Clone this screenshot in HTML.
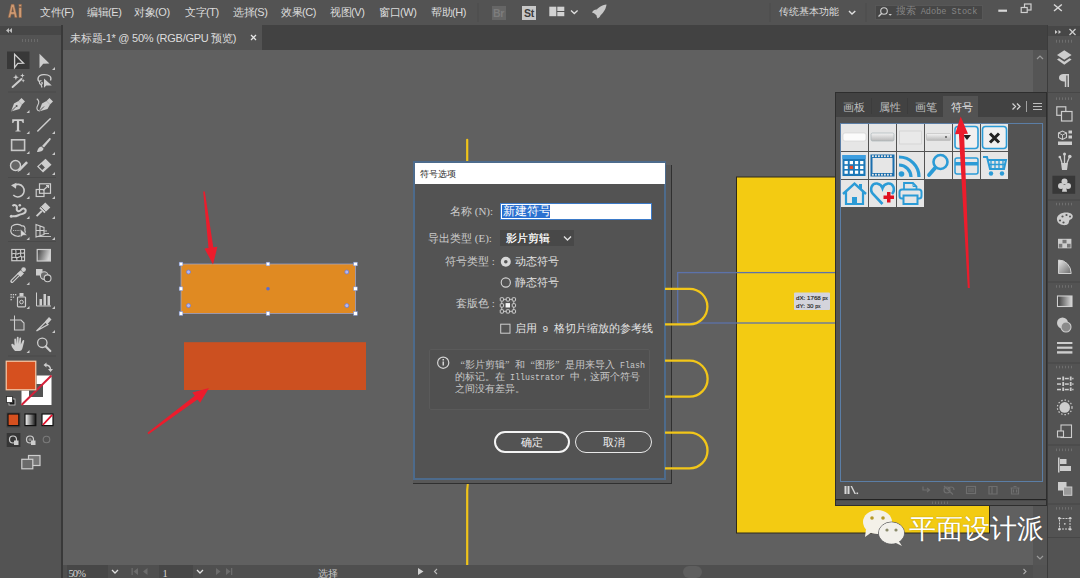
<!DOCTYPE html>
<html><head><meta charset="utf-8">
<style>
*{margin:0;padding:0;box-sizing:border-box}
html,body{width:1080px;height:578px;overflow:hidden;background:#535353;font-family:"Liberation Sans",sans-serif;color:#e0e0e0}
.a{position:absolute;white-space:nowrap}
.mi{position:absolute;top:5px;font-size:11px;line-height:14px;color:#dcdcdc;letter-spacing:-0.45px}
.dl{font-family:"Liberation Serif",serif;font-size:11px;line-height:14px;color:#cccccc;font-weight:300}
.di{font-family:"Liberation Serif",serif;font-size:10px;line-height:12px;color:#c8c8c8;font-weight:300}
.ql,.qr{display:inline-block;width:10px}.ql{text-align:right}.qr{text-align:left}
.mo{font-family:"Liberation Mono",monospace;font-size:8.333px}
.pt{font-size:11px;line-height:14px;color:#bdbdbd}
svg{position:absolute;left:0;top:0}
</style></head><body>
<!-- base regions -->
<div class="a" style="left:0;top:0;width:1080px;height:25px;background:#535353"></div>
<div class="a" style="left:0;top:25px;width:1047px;height:25px;background:#424242"></div>
<div class="a" style="left:63px;top:25px;width:199px;height:25px;background:#535353"></div>
<div class="a" style="left:0;top:25px;width:62px;height:553px;background:#535353"></div>
<div class="a" style="left:0;top:26px;width:61px;height:9px;background:#474747"></div>
<div class="a" style="left:61px;top:25px;width:2px;height:553px;background:#393939"></div>
<div class="a" style="left:63px;top:50px;width:970px;height:515px;background:#606060"></div>
<div class="a" style="left:1033px;top:50px;width:14px;height:515px;background:#555555"></div>
<div class="a" style="left:63px;top:565px;width:970px;height:13px;background:#4f4f4f"></div>
<div class="a" style="left:1047px;top:25px;width:33px;height:553px;background:#535353;border-left:1px solid #3c3c3c"></div>
<div class="a" style="left:1048px;top:26px;width:32px;height:10px;background:#474747"></div>

<!-- menu -->
<div class="mi" style="left:40px">文件(F)</div>
<div class="mi" style="left:87px">编辑(E)</div>
<div class="mi" style="left:134px">对象(O)</div>
<div class="mi" style="left:185px">文字(T)</div>
<div class="mi" style="left:233px">选择(S)</div>
<div class="mi" style="left:281px">效果(C)</div>
<div class="mi" style="left:330px">视图(V)</div>
<div class="mi" style="left:379px">窗口(W)</div>
<div class="mi" style="left:431px">帮助(H)</div>
<div class="a" style="left:491.5px;top:6px;width:14px;height:13.5px;background:#666666;color:#7d7d7d;font-size:10.5px;line-height:14px;text-align:center;font-weight:bold;letter-spacing:-0.3px">Br</div>
<div class="a" style="left:522px;top:6px;width:14px;height:13.5px;background:#c8c8c8;color:#3c3c3c;font-size:10.5px;line-height:14px;text-align:center;font-weight:bold;letter-spacing:-0.3px">St</div>
<div class="mi" style="left:779px;font-size:10px;letter-spacing:0">传统基本功能</div>
<div class="a" style="left:875px;top:4.5px;width:108px;height:15.5px;background:#464646;border:1px solid #575757"></div>
<div class="a" style="left:895.5px;top:5px;font-family:'Liberation Mono',monospace;font-size:8.6px;line-height:14px;color:#858585"><span style="font-size:9.5px">搜索</span> Adobe Stock</div>

<!-- tab -->
<div class="a" style="left:70px;top:31px;font-size:11px;line-height:14px;color:#dedede;letter-spacing:-0.25px">未标题-1* @ 50% (RGB/GPU 预览)</div>

<!-- status -->
<div class="a" style="left:67px;top:565px;width:41px;height:13px;background:#474747"></div>
<div class="a" style="left:159px;top:565px;width:34px;height:13px;background:#474747"></div>
<div class="a" style="left:68.5px;top:567px;font-family:'Liberation Serif',serif;font-size:10.5px;line-height:13px;color:#d4d4d4;letter-spacing:-0.9px">50%</div>
<div class="a" style="left:162.5px;top:567px;font-family:'Liberation Serif',serif;font-size:10.5px;line-height:13px;color:#d4d4d4">1</div>
<div class="a" style="left:317.5px;top:567px;font-size:10px;line-height:13px;color:#c8c8c8">选择</div>
<svg width="1080" height="578" viewBox="0 0 1080 578"><g id="toolbar" fill="#cdcdcd" stroke="none">
 <!-- header arrows << -->
 <path d="M9,28 L6,30.5 L9,33 Z M12,28 L9,30.5 L12,33 Z" fill="#bdbdbd"/>
 <!-- gripper -->
 <g fill="#6a6a6a"><rect x="22" y="39" width="1" height="3"/><rect x="25" y="39" width="1" height="3"/><rect x="28" y="39" width="1" height="3"/><rect x="31" y="39" width="1" height="3"/><rect x="34" y="39" width="1" height="3"/><rect x="37" y="39" width="1" height="3"/></g>
 <!-- selected tool bg -->
 <rect x="7" y="51.5" width="22.5" height="17.5" fill="#383838"/>
 <!-- selection arrow outline -->
 <path d="M14.6,54.3 L14.6,67.6 L17.8,63.4 L23.5,63.2 Z" fill="none" stroke="#d0d0d0" stroke-width="1.3" stroke-linejoin="miter"/>
 <!-- direct selection -->
 <path d="M39.5,53.7 L39.5,68.2 L43.2,63.8 L49.4,63.6 Z"/>
 <!-- separators -->
 <g fill="#4a4a4a"><rect x="8" y="91.5" width="48" height="1"/><rect x="8" y="177" width="48" height="1"/><rect x="8" y="241" width="48" height="1"/><rect x="8" y="355.5" width="48" height="1"/></g>
 <!-- magic wand -->
 <path d="M12.6,87 L21.5,79" stroke="#cdcdcd" stroke-width="2" stroke-linecap="round"/>
 <path d="M15.9,74.3 L16.7,76.5 L18.9,77.3 L16.7,78.1 L15.9,80.3 L15.1,78.1 L12.9,77.3 L15.1,76.5 Z"/>
 <path d="M22.4,73.3 L23.0,75.0 L24.7,75.6 L23.0,76.19999999999999 L22.4,77.89999999999999 L21.799999999999997,76.19999999999999 L20.099999999999998,75.6 L21.799999999999997,75.0 Z"/>
 <path d="M23.2,78.9 L23.7,80.2 L25.0,80.7 L23.7,81.2 L23.2,82.5 L22.7,81.2 L21.4,80.7 L22.7,80.2 Z"/>
 <!-- lasso -->
 <path d="M40,82 C36.5,80 37.5,75 43.5,74.6 C49.5,74.3 52,77 50.5,80.5" fill="none" stroke="#cdcdcd" stroke-width="1.3"/>
 <path d="M41.5,80.5 C39,80.5 38.7,84 40.8,84.3 C42.6,84.5 42.8,82.5 41.3,82.3 M41,84.3 L42,87.5" fill="none" stroke="#cdcdcd" stroke-width="1.2"/>
 <path d="M44,78.5 L44,87.8 L46.3,85.5 L51.8,85.4 Z"/>
 <!-- pen -->
 <path d="M11,111.5 L14,103.5 L18.5,101 L22,104.5 L19.5,109 Z" />
 <path d="M18.5,101 L21.5,98 L25,101.5 L22,104.5 Z"/>
 <path d="M11,111.5 L16,106.5" stroke="#535353" stroke-width="1"/>
 <circle cx="16.6" cy="105.9" r="1" fill="#535353"/>
 <!-- curvature pen -->
 <path d="M39,111.5 L42,103.5 L46.5,101 L50,104.5 L47.5,109 Z"/>
 <path d="M46.5,101 L49.5,98 L53,101.5 L50,104.5 Z"/>
 <path d="M39,111.5 L44,106.5" stroke="#535353" stroke-width="1"/>
 <path d="M36.8,98.8 C38.8,100.3 39.3,102.8 37.8,105.2 C36.3,107.5 36.5,110.5 39.5,111" fill="none" stroke="#cdcdcd" stroke-width="1.1"/>
 <!-- T -->
 <path d="M12.2,119.3 H23.8 V123 H22.6 C22.4,121.4 21.8,120.9 20.4,120.9 H19.1 V129.7 C19.1,130.4 19.5,130.6 20.6,130.7 V131.5 H15.4 V130.7 C16.5,130.6 16.9,130.4 16.9,129.7 V120.9 H15.6 C14.2,120.9 13.6,121.4 13.4,123 H12.2 Z"/>
 <!-- line -->
 <path d="M37.8,131 L50.2,118.8" stroke="#cdcdcd" stroke-width="1.5" stroke-linecap="round"/>
 <!-- rect -->
 <rect x="11.6" y="139.8" width="13" height="10.6" fill="#5c5c5c" stroke="#c8c8c8" stroke-width="1.6"/>
 <!-- brush -->
 <path d="M37,152 C37.5,149 39,146.5 41.5,146.5 L43.5,148.5 C43.5,151 40,152 37,152 Z"/>
 <path d="M42,146 L49,138.5 C50.2,137.5 51.3,138.6 50.5,139.8 L44,147.5 Z"/>
 <!-- shaper -->
 <circle cx="15.5" cy="165.5" r="5" fill="#656565" stroke="#cdcdcd" stroke-width="1.4"/>
 <path d="M17.5,172.3 L19,168.5 L26.2,161.3 L28,163.1 L20.8,170.3 Z"/>
 <!-- eraser -->
 <path d="M37,166.5 L45.5,158.8 L51.5,164.8 L43,172.5 Z"/>
 <path d="M38.8,166.6 L41.5,164.1 L44.9,167.5 L42.2,170 Z" fill="#535353"/>
 <!-- rotate -->
 <path d="M14.2,185.5 A6.3,6.3 0 1 1 13.3,195" fill="none" stroke="#cdcdcd" stroke-width="1.6"/>
 <path d="M11,185.3 L16.5,182.8 L16,188.8 Z"/>
 <!-- scale -->
 <rect x="39.5" y="183.8" width="11" height="9.5" fill="none" stroke="#cdcdcd" stroke-width="1.2"/>
 <rect x="36.2" y="189.5" width="7.8" height="7" fill="none" stroke="#cdcdcd" stroke-width="1.2"/>
 <path d="M43,190.5 L48.5,185.5 M46,185.5 H48.5 V188" fill="none" stroke="#cdcdcd" stroke-width="1.2"/>
 <!-- warp -->
 <path d="M12.5,206 C14.5,203.8 17.5,205.5 16.8,208.3 C16.2,211 19,212.3 21,209.8 C23,207.3 26.3,208.6 25.6,211.6 C25,214.3 21.8,213.8 19.8,214.6 C17.5,215.5 15.3,217.2 12.3,216" fill="none" stroke="#cdcdcd" stroke-width="2"/>
 <circle cx="19.8" cy="205.3" r="1.3"/>
 <circle cx="11.3" cy="216.2" r="1.5"/>
 <!-- puppet pin -->
 <path d="M39.3,208.3 L45.3,202.6 L50.3,207.6 L44.3,213.3 Z"/>
 <path d="M40.8,206.8 L45.8,211.8" stroke="#535353" stroke-width="0.8"/>
 <path d="M36.6,216.2 L41.8,211" stroke="#cdcdcd" stroke-width="1.8"/>
 <!-- free transform -->
 <path d="M13,225.5 C16,223.5 20,224.5 22,226 C24.5,225.5 25.5,228 24.8,230 C26,232 24.5,235 22,235 C19.5,237 15,236.5 13,234.5 C10.5,233.5 10.3,230 11.5,228.5 C11,227 12,225.8 13,225.5 Z" fill="none" stroke="#cdcdcd" stroke-width="1.2"/>
 <path d="M13,230.5 H21" stroke="#cdcdcd" stroke-width="0.8" stroke-dasharray="1.2 1"/>
 <path d="M20.6,229.2 L20.6,237.6 L22.9,235.3 L27.2,235.2 Z" fill="#d8d8d8" stroke="#535353" stroke-width="0.5"/>
 <!-- perspective grid -->
 <path d="M36,224.5 L36,237 L44,234.5 L44,227.5 Z M36,230.5 L44,230.5 M40,225.8 L40,235.8" fill="none" stroke="#cdcdcd" stroke-width="1.1"/>
 <path d="M44,231 H47 M44,233.5 H49 M38,236.5 H51" stroke="#cdcdcd" stroke-width="0.9"/>
 <!-- mesh -->
 <rect x="11.8" y="249.5" width="12.7" height="11.2" fill="#3e3e3e" stroke="#cdcdcd" stroke-width="1.2"/>
 <path d="M12,254 C14.5,252 16,255.5 18.5,253.5 C20.5,252 22.5,254.5 24.5,252.5 M12,257.8 C14.5,256 16.5,259 19,257 C21,255.5 22.5,258 24.5,256.5 M15.3,249.5 C17.5,252 14,255.5 16.5,258 C17.5,259 16.5,260 16.8,260.7 M20.3,249.5 C21.5,252 19.5,255 21.5,257.5 C22,258.5 21.5,260 21.8,260.7" fill="none" stroke="#cdcdcd" stroke-width="1.1"/>
 <!-- gradient -->
 <defs><linearGradient id="tg" x1="0" y1="0" x2="1" y2="0.3"><stop offset="0" stop-color="#3c3c3c"/><stop offset="1" stop-color="#d4d4d4"/></linearGradient></defs>
 <rect x="37.2" y="249.5" width="13.2" height="11.5" fill="url(#tg)" stroke="#cdcdcd" stroke-width="1.2"/>
 <!-- eyedropper -->
 <path d="M12,281.3 L19,274.3" stroke="#cdcdcd" stroke-width="3.4" stroke-linecap="round"/>
 <path d="M12.3,281 L18.7,274.6" stroke="#535353" stroke-width="1.2" stroke-linecap="round"/>
 <path d="M17.2,273.6 L20.6,270.2 L24,273.6 L20.6,277 Z"/>
 <circle cx="23.6" cy="269.6" r="2.3"/>
 <!-- blend -->
 <rect x="36" y="269" width="6.5" height="6.5"/>
 <circle cx="44.2" cy="275.6" r="3.8" fill="#6a6a6a" stroke="#cdcdcd" stroke-width="1.1"/>
 <circle cx="47.6" cy="278.3" r="3.4" fill="#454545" stroke="#cdcdcd" stroke-width="1.1"/>
 <!-- symbol sprayer -->
 <rect x="17.5" y="297" width="8" height="9.8" rx="0.8" fill="none" stroke="#cdcdcd" stroke-width="1.2"/>
 <rect x="19.5" y="293" width="4" height="3.5"/>
 <circle cx="21.5" cy="302" r="1.8" fill="none" stroke="#cdcdcd" stroke-width="1"/>
 <g><rect x="10.5" y="294" width="1.3" height="1.3"/><rect x="12.8" y="294" width="1.3" height="1.3"/><rect x="15" y="294" width="1.3" height="1.3"/><rect x="10.5" y="296.5" width="1.3" height="1.3"/><rect x="12.8" y="296.5" width="1.3" height="1.3"/><rect x="10.5" y="299" width="1.3" height="1.3"/></g>
 <!-- graph -->
 <path d="M36.5,292.5 V306 H51" fill="none" stroke="#cdcdcd" stroke-width="1"/>
 <rect x="39.5" y="299" width="2.5" height="6.5"/><rect x="43.5" y="294" width="2.5" height="11.5"/><rect x="47.5" y="296" width="2.5" height="9.5"/>
 <!-- artboard -->
 <path d="M14.5,320 H21 L24,323 V330 H14.5 Z" fill="#5e5e5e" stroke="#cdcdcd" stroke-width="1.1"/>
 <path d="M14.5,315.5 V320 M10,320 H14.5" stroke="#cdcdcd" stroke-width="1"/>
 <!-- slice -->
 <path d="M36.5,331 L45.5,322 L48,324.5 Z" fill="none" stroke="#cdcdcd" stroke-width="1.2"/>
 <path d="M45,321.5 L49,317 L51.5,319.5 L47.5,324 Z"/>
 <!-- hand -->
 <path d="M15,351 C13,349 11,346 11.3,344.5 C11.6,343.3 13,343.5 14,345 L14.5,345.5 L14.3,339.5 C14.3,338.2 16,338.2 16.1,339.5 L16.5,344 L16.8,337.8 C16.8,336.5 18.6,336.5 18.6,337.8 L18.7,344 L19.4,338.4 C19.6,337.2 21.2,337.4 21.1,338.6 L20.8,344.5 L22.5,340.7 C23,339.6 24.5,340 24.2,341.2 L22.5,348 C22,350 21,351 19.5,351 Z"/>
 <!-- zoom -->
 <circle cx="42.3" cy="342.8" r="4.7" fill="none" stroke="#cdcdcd" stroke-width="1.3"/>
 <path d="M45.8,346.4 L50.3,351" stroke="#cdcdcd" stroke-width="2.2" stroke-linecap="round"/>
 <!-- group triangles -->
 <g fill="#c8c8c8">
  <path d="M55,67 V70 H52 Z"/>
  <path d="M29.5,110 V113 H26.5 Z"/>
  <path d="M29.5,131 V134 H26.5 Z"/><path d="M55,131 V134 H52 Z"/>
  <path d="M29.5,151 V154 H26.5 Z"/><path d="M55,152 V155 H52 Z"/>
  <path d="M29.5,172 V175 H26.5 Z"/><path d="M55,172 V175 H52 Z"/>
  <path d="M29.5,196 V199 H26.5 Z"/><path d="M55,196 V199 H52 Z"/>
  <path d="M29.5,216 V219 H26.5 Z"/><path d="M55,216 V219 H52 Z"/>
  <path d="M29.5,237 V240 H26.5 Z"/><path d="M55,237 V240 H52 Z"/>
  <path d="M29.5,282 V285 H26.5 Z"/>
  <path d="M29.5,306 V309 H26.5 Z"/><path d="M55,306 V309 H52 Z"/>
  <path d="M55,330 V333 H52 Z"/>
  <path d="M29.5,350 V353 H26.5 Z"/>
 </g>
 <!-- fill / stroke -->
 <rect x="21.5" y="375.5" width="30" height="29.5" fill="#ffffff"/>
 <rect x="29" y="384" width="14" height="13" fill="#535353"/>
 <path d="M21.5,405 L51.5,375.5" stroke="#d4213a" stroke-width="2"/>
 <rect x="5.5" y="360.5" width="31" height="30" fill="#2f2f2f"/>
 <rect x="6.2" y="361.2" width="29.6" height="28.6" fill="#d6501f" stroke="#f6c8a8" stroke-width="1.3"/>
 <!-- swap arrow -->
 <path d="M45,365 C48.5,365 50.5,366 50.5,369.5" fill="none" stroke="#cdcdcd" stroke-width="1.3"/>
 <path d="M43.5,365 L46.5,362.5 L46.5,367.5 Z M50.5,372 L48,369 L53,369 Z"/>
 <!-- default fill stroke -->
 <rect x="9" y="399" width="6" height="6" fill="#1a1a1a" stroke="#cdcdcd" stroke-width="0.8"/>
 <rect x="6.5" y="396.5" width="6" height="6" fill="#ffffff" stroke="#2a2a2a" stroke-width="0.8"/>
 <!-- color mode row -->
 <rect x="6.5" y="412.5" width="14" height="15" fill="#444"/>
 <rect x="8" y="414" width="10.8" height="11.6" fill="#d6501f" stroke="#111" stroke-width="1.2"/>
 <defs><linearGradient id="bw" x1="0" x2="1"><stop offset="0" stop-color="#fff"/><stop offset="1" stop-color="#111"/></linearGradient></defs>
 <rect x="25" y="414" width="10.8" height="11.6" fill="url(#bw)" stroke="#111" stroke-width="1.2"/>
 <rect x="42" y="414" width="11" height="11.6" fill="#fff" stroke="#111" stroke-width="1.2"/>
 <path d="M42.8,425 L52.2,414.8" stroke="#e0102a" stroke-width="1.8"/>
 <!-- draw modes -->
 <rect x="6.7" y="433" width="13.7" height="14" fill="#363636"/>
 <circle cx="13" cy="439.5" r="3.5" fill="none" stroke="#cdcdcd" stroke-width="1.2"/>
 <rect x="14" y="440.5" width="4.5" height="4.5"/>
 <circle cx="30" cy="439.5" r="3.5" fill="none" stroke="#cdcdcd" stroke-width="1.2"/>
 <circle cx="30" cy="439.5" r="1.5" fill="#888"/>
 <rect x="31" y="440.5" width="4.5" height="4.5"/>
 <circle cx="46.5" cy="439.5" r="3.3" fill="none" stroke="#7a7a7a" stroke-width="1.1"/>
 <!-- screen mode -->
 <rect x="28.5" y="455.5" width="11.5" height="10" fill="#777" stroke="#cdcdcd" stroke-width="1.2"/>
 <rect x="21.8" y="459.3" width="11" height="9.5" fill="#6b6b6b" stroke="#cdcdcd" stroke-width="1.2"/>
</g>
<g id="misc" fill="#d2d2d2">
 <!-- ai logo -->
 <path d="M8.2,17.6 L11.3,4.3 H14 L17.2,17.6 H14.8 L14.1,14.2 H11.2 L10.5,17.6 Z M11.7,12 H13.6 L12.65,7.2 Z" fill="#cf9b74" stroke="#8e6040" stroke-width="0.5"/>
 <rect x="18.9" y="7.6" width="2.6" height="10" fill="#cf9b74" stroke="#8e6040" stroke-width="0.5"/>
 <rect x="18.9" y="4.3" width="2.6" height="2.3" fill="#cf9b74" stroke="#8e6040" stroke-width="0.5"/>
 <!-- layout icon -->
 <rect x="549.3" y="6.7" width="7" height="9.5"/>
 <rect x="557.3" y="6.7" width="7" height="4.3"/>
 <rect x="557.3" y="12" width="7" height="4.2"/>
 <path d="M571,10.5 L574.3,13.5 L577.6,10.5" fill="none" stroke="#e0e0e0" stroke-width="1.3"/>
 <!-- rocket -->
 <path d="M594,13 C597,8 602,5 606.5,4.5 C606,9 603,14 598,17 Z" fill="#c8c8c8"/>
 <path d="M592,12.5 C593,10 595.5,9 597,9.5 L594.5,13.5 Z M597.5,18.5 C600,17.5 601,15 600.5,13.5 L596.5,16 Z" fill="#c8c8c8"/>
 <!-- separators in menubar -->
 <rect x="477.5" y="3" width="1" height="19" fill="#4c4c4c"/>
 <rect x="769.5" y="3" width="1" height="19" fill="#4c4c4c"/>
 <rect x="865.5" y="3" width="1" height="19" fill="#4c4c4c"/>
 <!-- workspace chevron -->
 <path d="M849,11 L852,14 L855.3,11" fill="none" stroke="#e0e0e0" stroke-width="1.4"/>
 <!-- search magnifier -->
 <circle cx="884" cy="11" r="3.3" fill="none" stroke="#cfcfcf" stroke-width="1.1"/>
 <path d="M881.6,13.5 L878.5,16.5" stroke="#cfcfcf" stroke-width="1.3"/>
 <path d="M888.5,14 L892,14 L890.2,15.8 Z" fill="#cfcfcf"/>
 <!-- window controls -->
 <rect x="998.3" y="9.6" width="8.7" height="2.2" fill="#d8d8d8"/>
 <rect x="1024.5" y="4" width="6.5" height="6" fill="none" stroke="#d0d0d0" stroke-width="1.2"/>
 <rect x="1021.2" y="7.5" width="6" height="5" fill="#535353" stroke="#d0d0d0" stroke-width="1.2"/>
 <path d="M1054,4.5 L1061.8,11 M1061.8,4.5 L1054,11" stroke="#d8d8d8" stroke-width="1.5"/>
 <!-- tab close -->
 <path d="M251,35 L256,40 M256,35 L251,40" stroke="#e6e6e6" stroke-width="1.3"/>
 <!-- vertical scrollbar arrows -->
 <path d="M1037,59 L1040,56 L1043,59" fill="none" stroke="#9a9a9a" stroke-width="1.2"/>
 <path d="M1037,556 L1040,559 L1043,556" fill="none" stroke="#9a9a9a" stroke-width="1.2"/>
 <!-- status bar -->
 <path d="M112,570 L115,573 L118,570" fill="none" stroke="#e0e0e0" stroke-width="1.3"/>
 <path d="M197,570 L200,573 L203,570" fill="none" stroke="#e0e0e0" stroke-width="1.3"/>
 <g fill="#6c6c6c"><rect x="131.5" y="568" width="1.3" height="7"/><path d="M138,568 L133.5,571.5 L138,575 Z M147.5,568 L143,571.5 L147.5,575 Z"/>
 <path d="M216,568 L220.5,571.5 L216,575 Z M226,568 L230.5,571.5 L226,575 Z"/><rect x="231" y="568" width="1.3" height="7"/></g>
 <path d="M418,568 L423.5,571.5 L418,575 Z" fill="#d0d0d0"/>
 <path d="M437,569 L434.5,571.5 L437,574" fill="none" stroke="#bbb" stroke-width="1.1"/>
 <rect x="683" y="566" width="19" height="12" rx="6" fill="#5e5e5e"/>
 <path d="M1023.5,569 L1026,571.5 L1023.5,574" fill="none" stroke="#aaa" stroke-width="1.1"/>
</g>
<g id="rstrip" fill="#cdcdcd">
 <!-- header -->
 <path d="M1055,30 L1057.5,32 L1055,34 Z M1058.5,30 L1061,32 L1058.5,34 Z"/>
 <path d="M1069.5,29 L1075.5,35 M1075.5,29 L1069.5,35" stroke="#cdcdcd" stroke-width="1.3"/>
 <!-- grippers -->
 <g fill="#6e6e6e">
  <rect x="1055" y="40" width="17" height="2.5" fill="url(#grip)"/>
 </g>
 <!-- separators -->
 <g fill="#474747"><rect x="1048" y="92" width="32" height="1"/><rect x="1048" y="199.5" width="32" height="1"/><rect x="1048" y="281.5" width="32" height="1"/><rect x="1048" y="362.5" width="32" height="1"/><rect x="1048" y="444.5" width="32" height="1"/><rect x="1048" y="503.5" width="32" height="1"/><rect x="1048" y="537" width="32" height="1"/></g>
 <!-- layers -->
 <path d="M1057,55 L1064.3,50.3 L1071.6,55 L1064.3,59.7 Z"/>
 <path d="M1057,59.5 L1059,58.3 L1064.3,61.7 L1069.6,58.3 L1071.6,59.5 L1064.3,64.8 Z"/>
 <!-- pilcrow -->
 <path d="M1063.5,74 H1069 V87 H1067.5 V75.5 H1066.3 V87 H1064.8 V81.5 C1061.5,81.5 1059,80.2 1059,77.7 C1059,75.2 1061,74 1063.5,74 Z"/>
 <!-- artboards -->
 <rect x="1056.8" y="106.8" width="9" height="8.5" fill="none" stroke="#cdcdcd" stroke-width="1.2"/>
 <rect x="1061.5" y="111.5" width="10.5" height="9.5" fill="#535353" stroke="#cdcdcd" stroke-width="1.2"/>
 <!-- libraries / 3D -->
 <path d="M1058.5,133 L1062.5,131 L1066.5,133 L1066.5,137.5 L1062.5,139.5 L1058.5,137.5 Z" fill="none" stroke="#cdcdcd" stroke-width="1.1"/>
 <path d="M1058.5,133 L1062.5,135 L1066.5,133 M1062.5,135 V139.5" fill="none" stroke="#cdcdcd" stroke-width="0.9"/>
 <rect x="1068.5" y="130.5" width="3.5" height="3"/><rect x="1068.5" y="135.5" width="3.5" height="3"/>
 <rect x="1058" y="141.5" width="14" height="3.5"/>
 <!-- brushes -->
 <path d="M1061,163 H1068 L1067,170 H1062 Z"/>
 <path d="M1062,163 L1060,157 M1064.5,163 L1064.5,154 M1067,163 L1069.5,157" stroke="#cdcdcd" stroke-width="1.3"/>
 <circle cx="1064.5" cy="154" r="1.5"/><circle cx="1069.8" cy="156.5" r="1.8"/><circle cx="1059.8" cy="157" r="1.3"/>
 <!-- symbols selected -->
 <rect x="1052.4" y="175.7" width="22.8" height="18.1" fill="#383838"/>
 <circle cx="1064.5" cy="181.5" r="3"/><circle cx="1061" cy="186" r="3"/><circle cx="1068" cy="186" r="3"/>
 <path d="M1063.3,185 L1062,191.8 H1067 L1065.7,185 Z"/>
 <!-- color palette -->
 <path d="M1057,220 C1056,214 1064,211.5 1069.5,213 C1074,214.3 1073.5,218.5 1070.5,219.5 C1068.5,220.2 1069.5,222.5 1068,224 C1065,226.5 1058,225 1057,220 Z"/>
 <g fill="#535353"><circle cx="1060" cy="220.5" r="1.1"/><circle cx="1063.5" cy="222.5" r="1.1"/><circle cx="1062.5" cy="216.5" r="1.1"/><circle cx="1066.5" cy="215" r="1.1"/><circle cx="1070" cy="216.5" r="1"/></g>
 <!-- swatches -->
 <rect x="1058" y="238.8" width="13.4" height="9.5"/>
 <g fill="#777"><rect x="1062.5" y="239.8" width="4" height="3.5"/><rect x="1058.8" y="243.8" width="3.5" height="3.8"/><rect x="1067" y="243.8" width="3.6" height="3.8"/></g>
 <!-- gradient quarter -->
 <defs>
  <linearGradient id="gq" x1="0" y1="0" x2="1" y2="1"><stop offset="0" stop-color="#e8e8e8"/><stop offset="1" stop-color="#6a6a6a"/></linearGradient>
  <linearGradient id="gsq" x1="0" x2="1"><stop offset="0" stop-color="#3a3a3a"/><stop offset="1" stop-color="#dcdcdc"/></linearGradient>
  <pattern id="grip" width="3" height="3" patternUnits="userSpaceOnUse"><rect width="1" height="3" fill="#6e6e6e"/></pattern>
 </defs>
 <path d="M1058.5,260 A12.5,13.5 0 0 1 1071.2,273.5 H1058.5 Z" fill="url(#gq)" stroke="#d0d0d0" stroke-width="1"/>
 <!-- transparency -->
 <rect x="1057.5" y="296" width="14.5" height="10.5" fill="url(#gsq)" stroke="#d0d0d0" stroke-width="1.1"/>
 <!-- appearance -->
 <circle cx="1062.5" cy="323" r="5.5"/>
 <circle cx="1066" cy="327" r="5" fill="#8a8a8a" stroke="#cdcdcd" stroke-width="1.1"/>
 <!-- stroke -->
 <rect x="1057" y="342" width="15.4" height="2"/><rect x="1057" y="346.6" width="15.4" height="2.2"/><rect x="1057" y="351.2" width="15.4" height="2.4"/>
 <!-- align-like dotted -->
 <g fill="#cdcdcd"><rect x="1062.3" y="376.5" width="1.8" height="4.0"/><rect x="1062.3" y="382" width="1.8" height="4"/><rect x="1062.3" y="387.5" width="1.8" height="3.5"/><rect x="1069.8" y="376.5" width="1.8" height="4.0"/><rect x="1069.8" y="382" width="1.8" height="4"/><rect x="1069.8" y="387.5" width="1.8" height="3.5"/><rect x="1057" y="377.8" width="4" height="1.5"/><rect x="1064.8" y="377.8" width="4.0" height="1.5"/><rect x="1072.2" y="377.8" width="1.2999999999999545" height="1.5"/><rect x="1057" y="383.3" width="4" height="1.5"/><rect x="1064.8" y="383.3" width="4.0" height="1.5"/><rect x="1072.2" y="383.3" width="1.2999999999999545" height="1.5"/><rect x="1057" y="388.8" width="4" height="1.5"/><rect x="1064.8" y="388.8" width="4.0" height="1.5"/><rect x="1072.2" y="388.8" width="1.2999999999999545" height="1.5"/></g>
 <!-- glow circle -->
 <circle cx="1064.7" cy="407.4" r="5.3"/>
 <circle cx="1064.7" cy="407.4" r="7.3" fill="none" stroke="#cdcdcd" stroke-width="1.2" stroke-dasharray="1.5 1.9"/>
 <!-- transform -->
 <rect x="1061" y="425" width="10.5" height="12.5" fill="none" stroke="#cdcdcd" stroke-width="1.1"/>
 <rect x="1057.5" y="431" width="6" height="6" fill="#535353" stroke="#cdcdcd" stroke-width="1.1"/>
 <!-- align -->
 <rect x="1058" y="457.5" width="1.5" height="15"/><rect x="1060" y="459" width="6.5" height="5"/><rect x="1060" y="466" width="11" height="5"/>
 <!-- pathfinder -->
 <rect x="1058" y="482" width="8.5" height="8.5"/><rect x="1063.5" y="487" width="8.3" height="8.3" fill="#9a9a9a" stroke="#cdcdcd" stroke-width="1"/>
 <!-- artboard dotted -->
 <rect x="1059.5" y="518.5" width="10.5" height="10.5" fill="none" stroke="#cdcdcd" stroke-width="1" stroke-dasharray="2 1"/>
 <circle cx="1059.3" cy="518.3" r="1.3"/><circle cx="1070.2" cy="518.3" r="1.3"/><circle cx="1059.3" cy="529.2" r="1.3"/><circle cx="1070.2" cy="529.2" r="1.3"/>
 <circle cx="1064.8" cy="523.8" r="0.9"/>
</g>
<rect x="1055" y="39.8" width="17" height="2.5" fill="url(#grip)"/><rect x="1055" y="97.39999999999999" width="17" height="2.5" fill="url(#grip)"/><rect x="1055" y="202.8" width="17" height="2.5" fill="url(#grip)"/><rect x="1055" y="285.2" width="17" height="2.5" fill="url(#grip)"/><rect x="1055" y="365.8" width="17" height="2.5" fill="url(#grip)"/><rect x="1055" y="448.6" width="17" height="2.5" fill="url(#grip)"/><rect x="1055" y="507.1" width="17" height="2.5" fill="url(#grip)"/><g id="canvasg">
 <!-- yellow vertical line -->
 <path d="M467.2,139.8 V163" stroke="#f0c419" stroke-width="2.2" stroke-linecap="round"/>
 <path d="M469.8,478 C468,481.5 467.2,484.5 467.2,490 V565" stroke="#f0c419" stroke-width="2.2" fill="none"/>
 <!-- yellow rect -->
 <rect x="736.5" y="177" width="253" height="356" fill="#f3cb12" stroke="#2e2a1a" stroke-width="1"/>
 <!-- blue selection rect -->
 <rect x="677.7" y="272.6" width="170" height="50.4" fill="none" stroke="#5c72aa" stroke-width="1.3"/>
 <!-- tooltip -->
 <rect x="794" y="292.5" width="36" height="17.5" fill="#d4d4dc" rx="1"/>
 <text x="796" y="300.3" font-family="Liberation Sans" font-size="6.2" fill="#262626" stroke="#262626" stroke-width="0.15">dX: 1768 <tspan font-size="5">px</tspan></text>
 <text x="796" y="308" font-family="Liberation Sans" font-size="6.2" fill="#262626" stroke="#262626" stroke-width="0.15">dY: 30 <tspan font-size="5">px</tspan></text>
 <!-- orange rect selected -->
 <rect x="181" y="264" width="174.5" height="49.5" fill="#e08a22"/>
 <rect x="181" y="264" width="174.5" height="49.5" fill="none" stroke="#9aa6d8" stroke-width="0.7"/>
 <g fill="#ffffff" stroke="#7d95dd" stroke-width="0.5"><rect x="179.2" y="262.2" width="3.6" height="3.6"/><rect x="266.2" y="262.2" width="3.6" height="3.6"/><rect x="353.7" y="262.2" width="3.6" height="3.6"/><rect x="179.2" y="286.9" width="3.6" height="3.6"/><rect x="353.7" y="286.9" width="3.6" height="3.6"/><rect x="179.2" y="311.7" width="3.6" height="3.6"/><rect x="266.2" y="311.7" width="3.6" height="3.6"/><rect x="353.7" y="311.7" width="3.6" height="3.6"/></g>
 <g fill="#b8b8ee" stroke="#6b7fd8" stroke-width="0.8">
  <circle cx="188.5" cy="272" r="2"/><circle cx="188.5" cy="305.6" r="2"/><circle cx="346.8" cy="272" r="2"/><circle cx="346.8" cy="305.6" r="2"/>
 </g>
 <circle cx="268" cy="288.7" r="1.8" fill="#5a6ed0"/>
 <!-- red-orange rect -->
 <rect x="184" y="342.2" width="182" height="47.8" fill="#cc5020"/>
 <!-- red arrows -->
 <g fill="#ec1c2c" stroke="none">
  <path d="M203.2,191.6 L208.5,247.9 L204.5,248.4 L213.0,264.5 L217.4,246.8 L213.3,247.3 L204.8,191.4 Z"/>
  <path d="M148.5,434.2 L197.5,399.4 L200.1,402.8 L209.0,388.0 L192.3,392.4 L194.8,395.7 L147.5,432.8 Z"/>
  
 </g>
</g>
</svg>
<!-- dialog -->
<div class="a" style="left:413px;top:165px;width:258.5px;height:318.5px;background:#585858;border-right:1px solid #303030;border-bottom:1px solid #303030"></div>
<div class="a" style="left:413.2px;top:161px;width:253.3px;height:318.5px;background:#535353;border:2px solid #4d6b8c"></div>
<div class="a" style="left:415px;top:162.8px;width:249.7px;height:21.4px;background:#ffffff"></div>
<div class="a" style="left:419.5px;top:168px;font-size:9.3px;line-height:13px;color:#2e2e2e">符号选项</div>
<div class="a dl" style="left:450px;top:204px">名称 (N):</div>
<div class="a" style="left:500px;top:203px;width:152px;height:17px;background:#fff;border:1px solid #3b7ac8"></div>
<div class="a" style="left:502px;top:205px;width:48px;height:13px;background:#2a70d0"></div>
<div class="a" style="left:503px;top:204px;font-family:'Liberation Serif',serif;font-size:11.5px;line-height:15px;color:#fff">新建符号</div>
<div class="a dl" style="left:428px;top:231px">导出类型 (E):</div>
<div class="a" style="left:500px;top:230px;width:74px;height:16px;background:#484848"></div>
<div class="a" style="left:506px;top:231px;font-family:'Liberation Serif',serif;font-size:11px;line-height:14px;color:#f4f4f4;text-shadow:0 0 0.4px #fff">影片剪辑</div>
<div class="a dl" style="left:445px;top:254px">符号类型 :</div>
<div class="a dl" style="left:515px;top:254px;color:#e4e4e4">动态符号</div>
<div class="a dl" style="left:515px;top:275px;color:#e4e4e4">静态符号</div>
<div class="a dl" style="left:456px;top:296px">套版色 :</div>
<div class="a dl" style="left:515px;top:321px;color:#e4e4e4">启用<span style="display:inline-block;width:16.5px;text-align:center;font-family:'Liberation Mono',monospace;font-size:9.5px">9</span>格切片缩放的参考线</div>
<div class="a" style="left:429px;top:348.5px;width:221px;height:61.5px;background:#505050;border:1px solid #5a5a5a;border-radius:2px"></div>
<div class="a di" style="left:455px;top:358.5px"><span class="ql">“</span>影片剪辑<span class="qr">”</span>和<span class="ql">“</span>图形<span class="qr">”</span>是用来导入<span class="mo"> Flash</span></div>
<div class="a di" style="left:455px;top:370.7px">的标记。在<span class="mo"> Illustrator </span>中，这两个符号</div>
<div class="a di" style="left:455px;top:382.9px">之间没有差异。</div>
<div class="a" style="left:493.5px;top:431px;width:76.5px;height:21.5px;border:2px solid #f4f4f4;border-radius:11px"></div>
<div class="a" style="left:574.5px;top:431px;width:77.5px;height:21.5px;border:1.6px solid #e8e8e8;border-radius:11px"></div>
<div class="a dl" style="left:521px;top:435px;color:#f0f0f0">确定</div>
<div class="a dl" style="left:603px;top:435px;color:#f0f0f0">取消</div>
<svg width="1080" height="578" viewBox="0 0 1080 578"><g id="dialogicons">
<!-- U shapes -->
 <g fill="none" stroke="#f2c619" stroke-width="2.3">
  <path d="M665,288.8 H689.6 A17.8,17.8 0 0 1 689.6,324.4 H665"/>
  <path d="M665,360.7 H689.6 A18,18 0 0 1 689.6,396.7 H665"/>
  <path d="M665,432.6 H689.6 A17.9,17.9 0 0 1 689.6,468.4 H665"/>
 </g>
 <!-- dropdown chevron -->
 <path d="M564,236.5 L567.5,240 L571,236.5" fill="none" stroke="#e0e0e0" stroke-width="1.4"/>
 <!-- radio 1 -->
 <circle cx="505.8" cy="261.7" r="5" fill="#d8d8d8"/>
 <circle cx="505.8" cy="261.7" r="1.8" fill="#555"/>
 <!-- radio 2 -->
 <circle cx="505.8" cy="282.5" r="4.6" fill="none" stroke="#d4d4d4" stroke-width="1.1"/>
 <!-- registration icon -->
 <g fill="#d8d8d8"><rect x="503.8" y="298.90000000000003" width="12" height="0.8"/><rect x="503.8" y="310.90000000000003" width="12" height="0.8"/><rect x="501.40000000000003" y="301.3" width="0.8" height="12"/><rect x="513.4" y="301.3" width="0.8" height="12"/></g><rect x="500.25" y="297.75" width="3.3" height="3.3" rx="0.6" fill="#4a4a4a" stroke="#dcdcdc" stroke-width="0.9"/><rect x="506.25" y="297.75" width="3.3" height="3.3" rx="0.6" fill="#4a4a4a" stroke="#dcdcdc" stroke-width="0.9"/><rect x="512.25" y="297.75" width="3.3" height="3.3" rx="0.6" fill="#4a4a4a" stroke="#dcdcdc" stroke-width="0.9"/><rect x="500.25" y="303.75" width="3.3" height="3.3" rx="0.6" fill="#4a4a4a" stroke="#dcdcdc" stroke-width="0.9"/><rect x="505.6" y="303.1" width="4.4" height="4.4" fill="#f4f4f4"/><rect x="512.25" y="303.75" width="3.3" height="3.3" rx="0.6" fill="#4a4a4a" stroke="#dcdcdc" stroke-width="0.9"/><rect x="500.25" y="309.75" width="3.3" height="3.3" rx="0.6" fill="#4a4a4a" stroke="#dcdcdc" stroke-width="0.9"/><rect x="506.25" y="309.75" width="3.3" height="3.3" rx="0.6" fill="#4a4a4a" stroke="#dcdcdc" stroke-width="0.9"/><rect x="512.25" y="309.75" width="3.3" height="3.3" rx="0.6" fill="#4a4a4a" stroke="#dcdcdc" stroke-width="0.9"/>
 <!-- checkbox -->
 <rect x="500.7" y="324.2" width="9.3" height="9" fill="none" stroke="#cfcfcf" stroke-width="1"/>
 <!-- info icon -->
 <circle cx="443.2" cy="362.7" r="5.6" fill="none" stroke="#d4d4d4" stroke-width="1.2"/>
 <rect x="442.5" y="361.5" width="1.5" height="4" fill="#d4d4d4"/><rect x="442.5" y="359" width="1.5" height="1.5" fill="#d4d4d4"/>
</g>
</svg>
<!-- symbols panel -->
<div class="a" style="left:834.5px;top:92px;width:212.5px;height:414px;background:#2e2e2e"></div>
<div class="a" style="left:835.5px;top:93px;width:210.5px;height:24px;background:#424242"></div>
<div class="a" style="left:835.5px;top:117px;width:210.5px;height:382px;background:#535353"></div>
<div class="a" style="left:835.5px;top:500px;width:210.5px;height:5px;background:#535353"></div>
<div class="a" style="left:943px;top:96px;width:35px;height:22px;background:#535353"></div>
<div class="a pt" style="left:843px;top:100px">画板</div>
<div class="a pt" style="left:879px;top:100px">属性</div>
<div class="a pt" style="left:915px;top:100px">画笔</div>
<div class="a pt" style="left:950.5px;top:100px;color:#e6e6e6">符号</div>
<div class="a" style="left:839.5px;top:122.5px;width:203px;height:359px;border:1.5px solid #5b7ea6"></div>
<svg width="1080" height="578" viewBox="0 0 1080 578"><g id="cells">
<rect x="841" y="124" width="27" height="27" fill="#e6e6e6"/>
<rect x="869" y="124" width="27" height="27" fill="#e6e6e6"/>
<rect x="897" y="124" width="27" height="27" fill="#e6e6e6"/>
<rect x="925" y="124" width="27" height="27" fill="#e6e6e6"/>
<rect x="953" y="124" width="27" height="27" fill="#e6e6e6"/>
<rect x="981" y="124" width="27" height="27" fill="#e6e6e6"/>
<rect x="841" y="152" width="27" height="27" fill="#e6e6e6"/>
<rect x="869" y="152" width="27" height="27" fill="#e6e6e6"/>
<rect x="897" y="152" width="27" height="27" fill="#e6e6e6"/>
<rect x="925" y="152" width="27" height="27" fill="#e6e6e6"/>
<rect x="953" y="152" width="27" height="27" fill="#e6e6e6"/>
<rect x="981" y="152" width="27" height="27" fill="#e6e6e6"/>
<rect x="841" y="180" width="27" height="27" fill="#e6e6e6"/>
<rect x="869" y="180" width="27" height="27" fill="#e6e6e6"/>
<rect x="897" y="180" width="27" height="27" fill="#e6e6e6"/>
<rect x="843" y="133" width="23" height="8" rx="2" fill="#fbfbfb" stroke="#d0d0d0" stroke-width="0.6"/>
<defs><linearGradient id="gb" x1="0" y1="0" x2="0" y2="1"><stop offset="0" stop-color="#f4f4f4"/><stop offset="1" stop-color="#b8b8b8"/></linearGradient></defs>
<rect x="871" y="133" width="23" height="8" rx="1.5" fill="url(#gb)" stroke="#a9b4b8" stroke-width="0.7"/>
<rect x="899.5" y="131" width="22" height="13" fill="#e9e9e9" stroke="#cfcfcf" stroke-width="0.7"/>
<rect x="926.5" y="133.5" width="24" height="7" rx="1" fill="url(#gb)" stroke="#b8b8b8" stroke-width="0.6"/><rect x="945" y="136" width="2" height="2" fill="#777"/>
<rect x="955" y="126.5" width="23" height="22" rx="3" fill="#f0f0f0" stroke="#2b9bd6" stroke-width="1.6"/><path d="M963,135 L971,135 L967,140 Z" fill="#222"/>
<rect x="982.5" y="126.5" width="24" height="22" rx="3" fill="#f0f0f0" stroke="#2b9bd6" stroke-width="1.6"/><path d="M990,133.5 L999,142.5 M999,133.5 L990,142.5" stroke="#222" stroke-width="3"/>
<rect x="842.5" y="155" width="23" height="21" fill="#1c78b8"/><rect x="842.5" y="155" width="23" height="4" fill="#3d9ee0"/>
<rect x="844.5" y="161.0" width="3.3" height="3.2" fill="#ffffff"/>
<rect x="844.5" y="165.8" width="3.3" height="3.2" fill="#ffffff"/>
<rect x="844.5" y="170.6" width="3.3" height="3.2" fill="#ffffff"/>
<rect x="849.7" y="161.0" width="3.3" height="3.2" fill="#ffffff"/>
<rect x="849.7" y="165.8" width="3.3" height="3.2" fill="#e84b2a"/>
<rect x="849.7" y="170.6" width="3.3" height="3.2" fill="#ffffff"/>
<rect x="854.9" y="161.0" width="3.3" height="3.2" fill="#ffffff"/>
<rect x="854.9" y="165.8" width="3.3" height="3.2" fill="#ffffff"/>
<rect x="854.9" y="170.6" width="3.3" height="3.2" fill="#ffffff"/>
<rect x="860.1" y="161.0" width="3.3" height="3.2" fill="#ffffff"/>
<rect x="860.1" y="165.8" width="3.3" height="3.2" fill="#ffffff"/>
<rect x="860.1" y="170.6" width="3.3" height="3.2" fill="#ffffff"/>
<rect x="870.5" y="154.5" width="24" height="22" fill="#1b6fae"/><rect x="872.5" y="158" width="20" height="15" fill="#e6e6e6"/>
<rect x="872" y="155.3" width="1.8" height="1.8" fill="#e6e6e6"/><rect x="872" y="173.8" width="1.8" height="1.8" fill="#e6e6e6"/>
<rect x="875" y="155.3" width="1.8" height="1.8" fill="#e6e6e6"/><rect x="875" y="173.8" width="1.8" height="1.8" fill="#e6e6e6"/>
<rect x="878" y="155.3" width="1.8" height="1.8" fill="#e6e6e6"/><rect x="878" y="173.8" width="1.8" height="1.8" fill="#e6e6e6"/>
<rect x="881" y="155.3" width="1.8" height="1.8" fill="#e6e6e6"/><rect x="881" y="173.8" width="1.8" height="1.8" fill="#e6e6e6"/>
<rect x="884" y="155.3" width="1.8" height="1.8" fill="#e6e6e6"/><rect x="884" y="173.8" width="1.8" height="1.8" fill="#e6e6e6"/>
<rect x="887" y="155.3" width="1.8" height="1.8" fill="#e6e6e6"/><rect x="887" y="173.8" width="1.8" height="1.8" fill="#e6e6e6"/>
<rect x="890" y="155.3" width="1.8" height="1.8" fill="#e6e6e6"/><rect x="890" y="173.8" width="1.8" height="1.8" fill="#e6e6e6"/>
<circle cx="901.5" cy="174" r="2.8" fill="#2b9bd6"/><path d="M899,165 A12,12 0 0 1 911,177" fill="none" stroke="#2b9bd6" stroke-width="3.2"/><path d="M899,157 A20,20 0 0 1 919,177" fill="none" stroke="#2b9bd6" stroke-width="3.2"/>
<circle cx="940.5" cy="162" r="7" fill="none" stroke="#2b9bd6" stroke-width="2.6"/><path d="M929,175 L935,168" stroke="#2b9bd6" stroke-width="3.8" stroke-linecap="round"/>
<rect x="955" y="158" width="23" height="16" rx="2" fill="none" stroke="#2b9bd6" stroke-width="1.5"/><rect x="955" y="162" width="23" height="3.5" fill="#2b9bd6"/>
<path d="M983,157 H987 L990,169 H1004 L1006,160 H988" fill="none" stroke="#2b9bd6" stroke-width="2"/><path d="M991,161 V168 M995,161 V168 M999,161 V168 M1003,161 V168 M989,164.5 H1005" stroke="#2b9bd6" stroke-width="1.3"/><circle cx="991" cy="173.5" r="2.2" fill="#2b9bd6"/><circle cx="1002" cy="173.5" r="2.2" fill="#2b9bd6"/>
<path d="M843,194 L854.5,183.5 L866,194" fill="none" stroke="#2b9bd6" stroke-width="2.4"/><path d="M846,192 V204 H863 V192" fill="none" stroke="#2b9bd6" stroke-width="2.2"/><rect x="852" y="197" width="5" height="7" fill="#2b9bd6"/><rect x="859" y="184" width="3" height="5" fill="#2b9bd6"/>
<path d="M882.5,204 L873,194 C869,189 872,183 877,183.5 C880,184 882,186.5 882.5,188 C883,186.5 885,184 888,183.5 C893,183 896,189 892,194" fill="none" stroke="#2b9bd6" stroke-width="2.6"/><path d="M887,192 H890.5 V195.5 H894 V199 H890.5 V202.5 H887 V199 H883.5 V195.5 H887 Z" fill="#e01020"/>
<path d="M904,189 V183 H913 L916.5,186.5 V189" fill="none" stroke="#2b9bd6" stroke-width="1.8"/><path d="M913,183 V186.5 H916.5" fill="none" stroke="#2b9bd6" stroke-width="1"/><rect x="899.5" y="189.5" width="22" height="9" rx="2.5" fill="none" stroke="#2b9bd6" stroke-width="2"/><rect x="903.5" y="195.5" width="14" height="8.5" fill="#e6e6e6" stroke="#2b9bd6" stroke-width="2"/></g><g id="panelicons">
 <!-- >> and | and ≡ -->
 <path d="M1012.5,103.5 L1015.5,106.5 L1012.5,109.5 M1017,103.5 L1020,106.5 L1017,109.5" fill="none" stroke="#d0d0d0" stroke-width="1.3"/>
 <rect x="1026" y="101" width="1" height="11" fill="#a0a0a0"/>
 <path d="M1033,103.5 H1042 M1033,106.5 H1042 M1033,109.5 H1042" stroke="#bdbdbd" stroke-width="1.2"/>
 <!-- tab separators -->
 <rect x="871" y="98" width="1" height="16" fill="#3c3c3c"/>
 <rect x="907" y="98" width="1" height="16" fill="#3c3c3c"/>
 <!-- bottom bar -->
 <rect x="835.5" y="499" width="210.5" height="1.2" fill="#232323"/>
 <g fill="#6a6a6a"><rect x="932" y="501.5" width="1" height="2.5"/><rect x="935" y="501.5" width="1" height="2.5"/><rect x="938" y="501.5" width="1" height="2.5"/><rect x="941" y="501.5" width="1" height="2.5"/><rect x="944" y="501.5" width="1" height="2.5"/><rect x="947" y="501.5" width="1" height="2.5"/></g>
 <!-- library icon -->
 <g fill="#d8d8d8"><rect x="844.5" y="486" width="2" height="8"/><rect x="847.5" y="486" width="2" height="8"/><path d="M850.5,486 L852,486 L856,494 L854.5,494 Z"/><rect x="856.5" y="492.5" width="1.6" height="1.6"/></g>
 <!-- disabled icons -->
 <g fill="none" stroke="#6e6e6e" stroke-width="1.2">
  <path d="M923,486.5 V490 H929 M927,488 L929.5,490 L927,492"/>
  <path d="M944,490 A3,3 0 0 1 950,490 A3,3 0 0 1 944,490 M948,490 A3,3 0 0 1 954,490 M944,486 L953,494.5"/>
  <rect x="966.5" y="486.5" width="9" height="7"/><path d="M968,489 H974 M968,491 H974"/>
  <path d="M989,486.5 H997 V494 H989 Z M992,486.5 V494" />
  <path d="M1010.5,488 H1019.5 M1011.5,488 V494 H1018.5 V488 M1013.5,486.5 H1016.5 M1013.5,489.5 V492.5 M1016.5,489.5 V492.5"/>
 </g>
</g>
<g fill="#ec1c2c"><path d="M969.8,288.0 L964.1,133.9 L968.0,133.7 L960.7,116.5 L955.0,134.3 L958.9,134.1 L967.8,288.0 Z"/></g></svg>
<svg width="1080" height="578" viewBox="0 0 1080 578">
 <g>
  <ellipse cx="877.5" cy="522" rx="14.5" ry="12" fill="#f4f1e8"/>
  <path d="M866,529 L865,537 L872,532 Z" fill="#f4f1e8"/>
  <circle cx="872" cy="518" r="1.8" fill="#b59a2a"/><circle cx="883" cy="518" r="1.8" fill="#b59a2a"/>
  <ellipse cx="891.5" cy="533" rx="13" ry="11" fill="#d8d8d8" stroke="#535353" stroke-width="0.8"/>
  <ellipse cx="891.5" cy="533" rx="12.5" ry="10.5" fill="#f2f0ea"/>
  <path d="M898,540 L902,546 L894,542 Z" fill="#f2f0ea"/>
  <circle cx="887" cy="530" r="1.6" fill="#8a8a6a"/><circle cx="896" cy="530" r="1.6" fill="#8a8a6a"/>
 </g>
</svg>
<div class="a" style="left:908.5px;top:511px;font-size:27px;line-height:36px;color:#ffffff;font-weight:300;text-shadow:0 0 1.5px rgba(0,0,0,0.3)">平面设计派</div>
</body></html>
